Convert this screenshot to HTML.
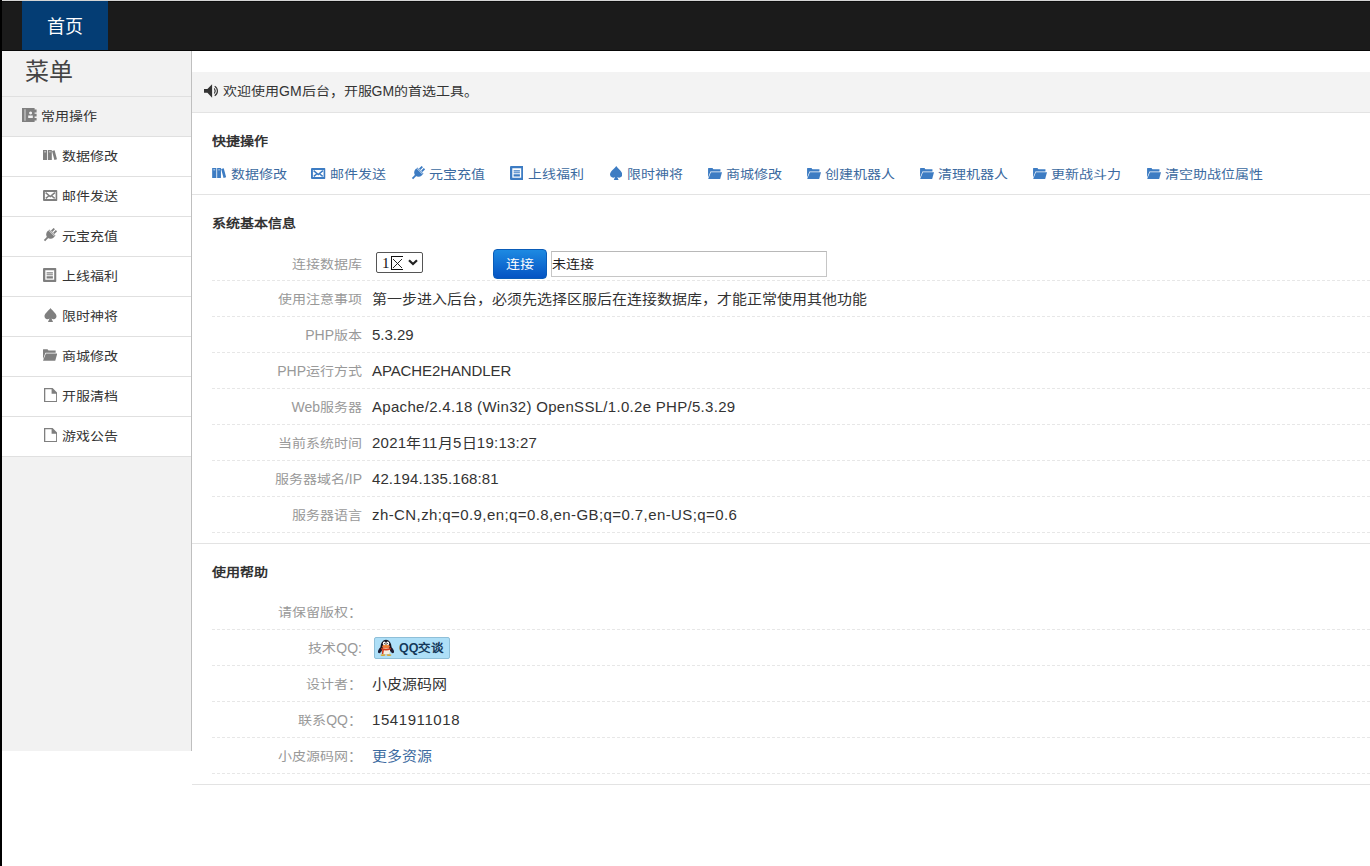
<!DOCTYPE html>
<html lang="zh-CN"><head><meta charset="utf-8">
<style>
*{box-sizing:border-box;}
html,body{margin:0;padding:0;background:#fff;width:1370px;height:866px;overflow:hidden;}
body{font-family:"Liberation Sans",sans-serif;font-size:14px;line-height:20px;color:#333;position:relative;}
.abs{position:absolute;white-space:nowrap;}
#lstrip{left:0;top:0;width:2px;height:866px;background:#000;z-index:10;}
#topline{left:2px;top:0;width:1368px;height:1px;background:#d5d5d5;}
#nav{left:2px;top:1px;width:1368px;height:50px;background:#1b1b1b;border-top:1px solid #0e0e0e;border-bottom:1px solid #080808;}
#home{left:22px;top:1px;width:86px;height:49px;background:#043d74;color:#fff;font-size:18px;line-height:53px;text-align:center;}
#side{left:2px;top:51px;width:190px;height:700px;background:#f2f2f2;border-right:1px solid #bfbfbf;}
#menu-title{left:25px;top:56px;font-size:24px;color:#444;line-height:32px;}
.mi{position:absolute;left:2px;width:189px;height:40px;border-top:1px solid #e0e0e0;background:#fff;font-size:14px;color:#333;line-height:38px;}
.mi.hd{background:#f2f2f2;}
.mi span{position:absolute;left:60px;top:0;}
.mi.hd span{left:39px;}
.mi svg{position:absolute;}
#welcome{left:192px;top:72px;width:1178px;height:41px;background:#f3f3f3;border-bottom:1px solid #e3e3e3;}
.sec-title{position:absolute;left:212px;font-weight:bold;font-size:14px;color:#333;white-space:nowrap;}
.hr{position:absolute;left:192px;width:1178px;height:1px;background:#e3e3e3;}
.row{position:absolute;left:212px;width:1158px;height:36px;border-bottom:1px dashed #e7e7e7;}
.lab{position:absolute;right:1008px;top:8px;color:#999;font-size:14px;white-space:nowrap;}
.val{position:absolute;left:160px;top:8px;color:#333;font-size:15px;white-space:nowrap;}
a{color:#3b6aa0;text-decoration:none;}
.ql{position:absolute;top:164px;white-space:nowrap;color:#3b6aa0;}
.ql svg{position:absolute;left:0;}
.ql span{position:absolute;left:19px;top:0;}
.gi{fill:#7f7f7f;color:#7f7f7f;}
.bi{fill:#3d7cc3;color:#3d7cc3;}
i.c{font-style:normal;display:inline-block;transform:scaleY(.88);transform-origin:50% 58%;}
</style></head>
<body>
<svg width="0" height="0" style="position:absolute">
<defs>
<symbol id="i-book" viewBox="0 0 14 10"><path fill-rule="evenodd" d="M0 0h4.2v10H0zM1.2 1.4v0.9h1.8V1.4zM5 0h3.8v10H5zM6.2 1.4v0.9h1.4V1.4zM9 1.1L11.6 0.3 14 9.2 11.4 10z"/></symbol>
<symbol id="i-env" viewBox="0 0 14.5 11"><path fill-rule="evenodd" d="M1 0h12.5a1 1 0 0 1 1 1v9a1 1 0 0 1-1 1H1a1 1 0 0 1-1-1V1a1 1 0 0 1 1-1zM1.9 1.9v7.2h10.7V1.9z"/><path d="M2.6 2.6L7.25 6.6 11.9 2.6M2.8 8.4L5.7 6M11.7 8.4L8.8 6" stroke-width="1.5" fill="none" stroke="currentColor"/></symbol>
<symbol id="i-plug" viewBox="0 0 14 14"><g transform="rotate(45 7 7)"><path d="M4.6 -0.6h1.8v3.8H4.6zM7.6 -0.6h1.8v3.8H7.6zM2.6 3.6H11.4V6.2A4.4 4.4 0 0 1 2.6 6.2z"/><path d="M6.1 10h1.8v4.8H6.1z"/><path d="M2.4 4.6H11.6" stroke-width="0.7" stroke="#fff"/></g></symbol>
<symbol id="i-list" viewBox="0 0 13.5 14"><path fill-rule="evenodd" d="M1 0h11.5a1 1 0 0 1 1 1v12a1 1 0 0 1-1 1H1a1 1 0 0 1-1-1V1a1 1 0 0 1 1-1zM2.3 2.2v9.6h8.9V2.2zM3.6 4.3h6.3v1.1H3.6zM3.6 6.2h6.3v1.1H3.6zM3.6 8.2h6.3v2.4H3.6z"/></symbol>
<symbol id="i-spade" viewBox="0 0 12.4 14.4"><path d="M6.2 0C7.6 2.4 12.4 5.4 12.4 8.6A3.1 3.1 0 0 1 7.2 10.8L8.8 14.4H3.6L5.2 10.8A3.1 3.1 0 0 1 0 8.6C0 5.4 4.8 2.4 6.2 0z"/></symbol>
<symbol id="i-folder" viewBox="0 0 14 11.4"><path d="M0 0.4Q0 0 0.4 0H4.4L5.4 1.2H12.4V3.4H2.4L0 9.8z"/><path d="M2.8 4.2H14L12 11.4H0z"/></symbol>
<symbol id="i-file" viewBox="0 0 13.4 14.2"><path fill-rule="evenodd" d="M0 0H8.6L13.4 4.8V14.2H0zM1.3 1.3V12.9H12.1V5.8H7.6V1.3z"/></symbol>
<symbol id="i-contact" viewBox="0 0 15 14"><path fill-rule="evenodd" d="M0 0h12.6v1.6h2v2.8h-2v1.4h2v2.8h-2v1.4h2v2.4h-2V14H0zM2.6 1.2v11.6h0.8V1.2zM8.6 3.6a1.5 1.5 0 1 0 0.02 0zM6.2 7.6v2.4h4.6V7.6z"/></symbol>
<symbol id="i-vol" viewBox="0 0 14 14"><path d="M0 4.9H3.4L8.1 0.2V13.8L3.4 8.8H0z"/><path d="M10.4 4.4Q12 6.9 10.4 9.5M10.7 2.2A5.6 5.6 0 0 1 10.7 11.8" stroke="#333" stroke-width="1.15" fill="none"/></symbol>
</defs></svg>

<div id="lstrip" class="abs"></div>
<div id="topline" class="abs"></div>
<div id="nav" class="abs"></div>
<div id="home" class="abs">首页</div>
<div id="side" class="abs"></div>
<div id="menu-title" class="abs">菜单</div>
<div class="mi hd" style="top:96px;"><svg class="gi" style="left:20px;top:11px" width="15" height="14"><use href="#i-contact"/></svg><span><i class="c">常用操作</i></span></div>
<div class="mi" style="top:136px;"><svg class="gi" style="left:41px;top:13px" width="14" height="10"><use href="#i-book"/></svg><span><i class="c">数据修改</i></span></div>
<div class="mi" style="top:176px;"><svg class="gi" style="left:41px;top:13px" width="14.5" height="11"><use href="#i-env"/></svg><span><i class="c">邮件发送</i></span></div>
<div class="mi" style="top:216px;"><svg class="gi" style="left:41px;top:11px" width="14" height="14"><use href="#i-plug"/></svg><span><i class="c">元宝充值</i></span></div>
<div class="mi" style="top:256px;"><svg class="gi" style="left:41px;top:11px" width="13.5" height="14"><use href="#i-list"/></svg><span><i class="c">上线福利</i></span></div>
<div class="mi" style="top:296px;"><svg class="gi" style="left:41.8px;top:11px" width="13" height="14"><use href="#i-spade"/></svg><span><i class="c">限时神将</i></span></div>
<div class="mi" style="top:336px;"><svg class="gi" style="left:41px;top:12px" width="14.3" height="12"><use href="#i-folder"/></svg><span><i class="c">商城修改</i></span></div>
<div class="mi" style="top:376px;"><svg class="gi" style="left:41.8px;top:11px" width="13.4" height="14.2"><use href="#i-file"/></svg><span><i class="c">开服清档</i></span></div>
<div class="mi" style="top:416px;height:41px;border-bottom:1px solid #e0e0e0;"><svg class="gi" style="left:41.8px;top:11px" width="13.4" height="14.2"><use href="#i-file"/></svg><span><i class="c">游戏公告</i></span></div>

<div id="welcome" class="abs"></div>
<svg class="abs" style="left:204px;top:84px;fill:#333" width="14" height="14"><use href="#i-vol"/></svg>
<div class="abs" style="left:223px;top:81px;"><i class="c">欢迎使用</i>GM<i class="c">后台</i>，<i class="c">开服</i>GM<i class="c">的首选工具</i>。</div>

<div class="sec-title" style="top:131px;"><i class="c">快捷操作</i></div>
<div class="ql" style="left:212px;"><svg class="bi" style="top:4px" width="14.3" height="10"><use href="#i-book"/></svg><span><i class="c">数据修改</i></span></div>
<div class="ql" style="left:311px;"><svg class="bi" style="top:3.6px;left:0.3px" width="14.5" height="11"><use href="#i-env"/></svg><span><i class="c">邮件发送</i></span></div>
<div class="ql" style="left:410px;"><svg class="bi" style="top:1.8px;left:0.8px" width="14" height="14"><use href="#i-plug"/></svg><span><i class="c">元宝充值</i></span></div>
<div class="ql" style="left:509px;"><svg class="bi" style="top:1.8px;left:0.6px" width="13.5" height="14"><use href="#i-list"/></svg><span><i class="c">上线福利</i></span></div>
<div class="ql" style="left:608px;"><svg class="bi" style="top:1.5px;left:1.8px" width="12.4" height="14.4"><use href="#i-spade"/></svg><span><i class="c">限时神将</i></span></div>
<div class="ql" style="left:707px;"><svg class="bi" style="top:3.6px;left:0.8px" width="14.1" height="11.4"><use href="#i-folder"/></svg><span><i class="c">商城修改</i></span></div>
<div class="ql" style="left:806px;"><svg class="bi" style="top:3.6px;left:0.8px" width="14.1" height="11.4"><use href="#i-folder"/></svg><span><i class="c">创建机器人</i></span></div>
<div class="ql" style="left:919px;"><svg class="bi" style="top:3.6px;left:0.8px" width="14.1" height="11.4"><use href="#i-folder"/></svg><span><i class="c">清理机器人</i></span></div>
<div class="ql" style="left:1032px;"><svg class="bi" style="top:3.6px;left:0.8px" width="14.1" height="11.4"><use href="#i-folder"/></svg><span><i class="c">更新战斗力</i></span></div>
<div class="ql" style="left:1146px;"><svg class="bi" style="top:3.6px;left:0.8px" width="14.1" height="11.4"><use href="#i-folder"/></svg><span><i class="c">清空助战位属性</i></span></div>
<div class="hr" style="top:194px;"></div>

<div class="sec-title" style="top:213px;"><i class="c">系统基本信息</i></div>
<div class="row" style="top:245px;"><div class="lab" style="top:9px"><i class="c">连接数据库</i></div></div>
<div class="abs" id="sel" style="left:376px;top:252px;width:47px;height:21px;border:1px solid #555;border-radius:2px;background:#fff;">
 <span class="abs" style="left:5px;top:1px;font-family:'Liberation Serif',serif;font-size:15px;line-height:18px;color:#111;">1</span>
 <span class="abs" style="left:14px;top:3px;width:12px;height:14px;border:1.3px solid #111;border-right:none;"></span>
 <svg class="abs" style="left:14px;top:3px" width="13" height="14"><path d="M2 3L11 12M11 3L2 12" stroke="#111" stroke-width="0.9"/></svg>
 <svg class="abs" style="left:31px;top:6px" width="10" height="7"><path d="M1 1.2L5 5L9 1.2" stroke="#222" stroke-width="2.2" fill="none"/></svg>
</div>
<div class="abs" id="btn" style="left:493px;top:249px;width:54px;height:30px;border-radius:4px;border:1px solid #0a5cb8;background:linear-gradient(#1d8ae2,#0553c3);color:#fff;font-size:14px;line-height:29px;text-align:center;"><i class="c">连接</i></div>
<div class="abs" id="inp" style="left:551px;top:251px;width:276px;height:26px;border:1px solid #c6c6c6;border-top-color:#b8b8b8;background:#fff;color:#222;font-size:14px;line-height:25px;padding-left:0px;"><i class="c">未连接</i></div>
<div class="row" style="top:281px;"><div class="lab"><i class="c">使用注意事项</i></div><div class="val"><i class="c">第一步进入后台</i>，<i class="c">必须先选择区服后在连接数据库</i>，<i class="c">才能正常使用其他功能</i></div></div>
<div class="row" style="top:317px;"><div class="lab">PHP<i class="c">版本</i></div><div class="val">5.3.29</div></div>
<div class="row" style="top:353px;"><div class="lab">PHP<i class="c">运行方式</i></div><div class="val" style="letter-spacing:-0.1px">APACHE2HANDLER</div></div>
<div class="row" style="top:389px;"><div class="lab">Web<i class="c">服务器</i></div><div class="val" style="letter-spacing:0.3px">Apache/2.4.18 (Win32) OpenSSL/1.0.2e PHP/5.3.29</div></div>
<div class="row" style="top:425px;"><div class="lab"><i class="c">当前系统时间</i></div><div class="val" style="letter-spacing:0.25px">2021<i class="c">年</i>11<i class="c">月</i>5<i class="c">日</i>19:13:27</div></div>
<div class="row" style="top:461px;"><div class="lab"><i class="c">服务器域名</i>/IP</div><div class="val" style="letter-spacing:0.09px">42.194.135.168:81</div></div>
<div class="row" style="top:497px;"><div class="lab"><i class="c">服务器语言</i></div><div class="val" style="letter-spacing:0.41px">zh-CN,zh;q=0.9,en;q=0.8,en-GB;q=0.7,en-US;q=0.6</div></div>
<div class="hr" style="top:543px;"></div>

<div class="sec-title" style="top:562px;"><i class="c">使用帮助</i></div>
<div class="row" style="top:594px;"><div class="lab"><i class="c">请保留版权</i>：</div></div>
<div class="row" style="top:630px;"><div class="lab"><i class="c">技术</i>QQ:</div>
 <div class="abs" style="left:162px;top:7px;width:76px;height:22px;border:1px solid #8fbfd8;border-radius:2px;background:#aedff7;"></div>
 <svg class="abs" style="left:166px;top:9px" width="16" height="17" viewBox="0 0 16 17">
  <ellipse cx="2" cy="11.4" rx="1.6" ry="3" fill="#1c1c34" transform="rotate(25 2 11.4)"/>
  <ellipse cx="14" cy="11.4" rx="1.6" ry="3" fill="#1c1c34" transform="rotate(-25 14 11.4)"/>
  <ellipse cx="8" cy="8.2" rx="5.6" ry="7.4" fill="#141420"/>
  <ellipse cx="8" cy="12.2" rx="4.2" ry="3.6" fill="#f5f0e4"/>
  <ellipse cx="8" cy="7.4" rx="3.8" ry="2" fill="#ec7a3c"/>
  <path d="M3 8.8Q8 11 13 8.8L12.7 10.6Q8 12.4 3.3 10.6z" fill="#d23a1a"/>
  <path d="M4.3 10.2l1.7.3-.7 4.4H3.9z" fill="#d23a1a"/>
  <ellipse cx="6.3" cy="4.4" rx="1.5" ry="1.8" fill="#fff"/><ellipse cx="9.7" cy="4.4" rx="1.5" ry="1.8" fill="#fff"/>
  <circle cx="6.8" cy="4.6" r=".55" fill="#000"/><circle cx="9.2" cy="4.6" r=".55" fill="#000"/>
  <ellipse cx="8" cy="6.4" rx="1" ry=".7" fill="#e8a020"/>
  <ellipse cx="5" cy="16.1" rx="2.5" ry=".9" fill="#d9a428"/><ellipse cx="11" cy="16.1" rx="2.5" ry=".9" fill="#d9a428"/>
 </svg>
 <div class="abs" style="left:187px;top:7px;font-size:12.5px;font-weight:bold;line-height:22px;color:#15395a;">QQ<i class="c">交谈</i></div>
</div>
<div class="row" style="top:666px;"><div class="lab"><i class="c">设计者</i>：</div><div class="val"><i class="c">小皮源码网</i></div></div>
<div class="row" style="top:702px;"><div class="lab"><i class="c">联系</i>QQ：</div><div class="val" style="letter-spacing:0.58px">1541911018</div></div>
<div class="row" style="top:738px;"><div class="lab"><i class="c">小皮源码网</i>：</div><div class="val"><a><i class="c">更多资源</i></a></div></div>
<div class="hr" style="top:784px;"></div>
</body></html>
